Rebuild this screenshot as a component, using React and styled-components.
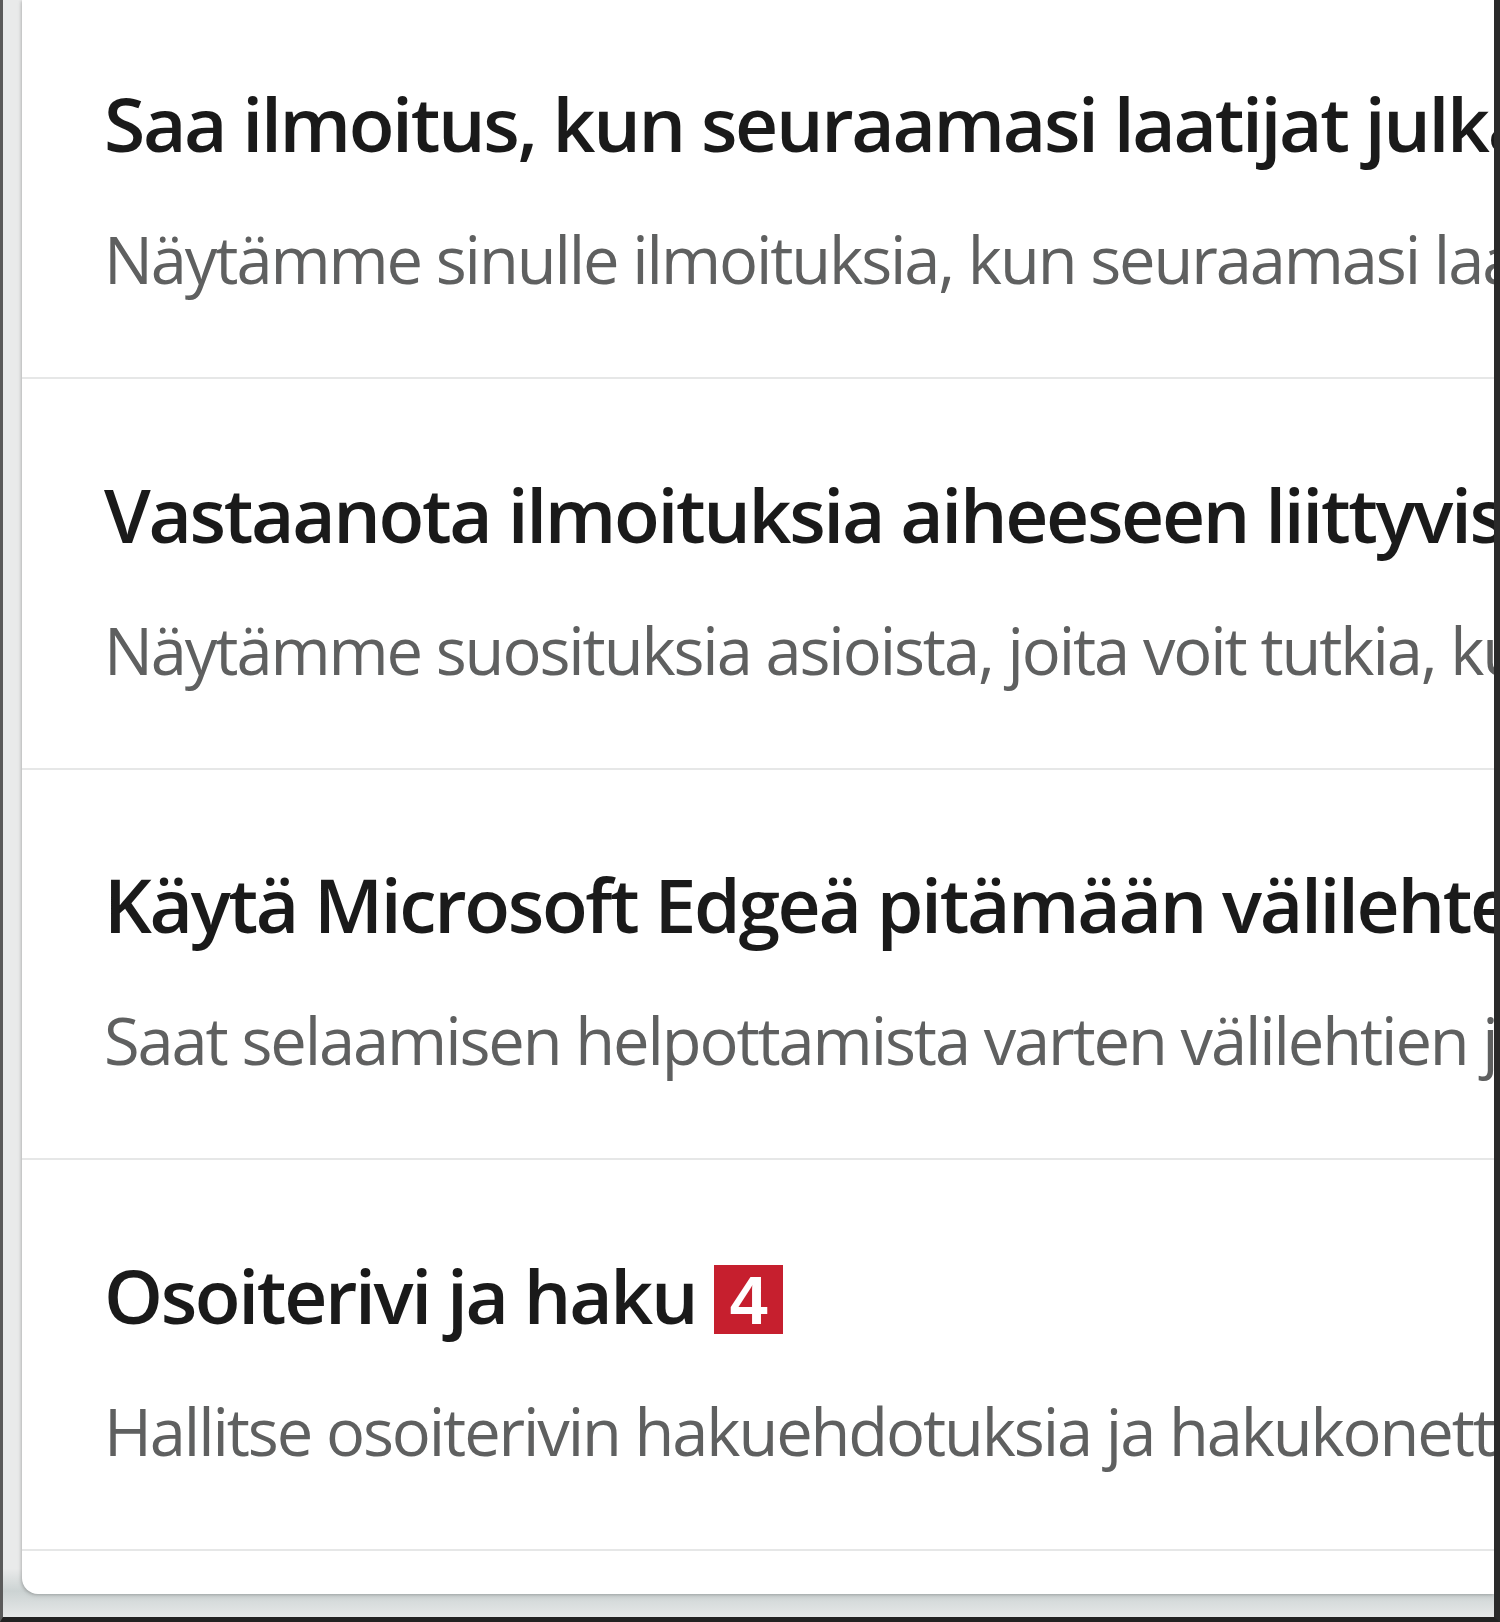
import React from 'react';
import styled, { createGlobalStyle } from 'styled-components';

const GlobalStyle = createGlobalStyle`
  html, body {
    margin: 0;
    padding: 0;
    background: #2b2b2b;
  }
`;

const Screen = styled.div`
  box-sizing: border-box;
  width: 1500px;
  height: 1622px;
  display: flex;
  flex-direction: column;
  border-left: 3px solid #5a5a5a;
  border-right: 6px solid #2a2a2a;
  border-bottom: 5px solid #222;
  background: linear-gradient(to bottom, #e9eaea 0%, #e9eaea 97%, #ccd3d3 98.4%, #e6e8e8 100%);
  overflow: hidden;
`;

const Card = styled.div`
  flex: 1;
  margin: 0 0 23px 19px;
  background: #ffffff;
  border-bottom-left-radius: 16px;
  box-shadow: -1px 1px 3px rgba(0, 0, 0, 0.18), 0 2px 6px rgba(0, 0, 0, 0.08);
  overflow: hidden;
`;

// the list is scrolled a little, so the first row starts above the top edge
const List = styled.div`
  margin-top: -11.5px;
  display: flex;
  flex-direction: column;
`;

const Row = styled.div`
  padding: 88.5px 0 78px 82px;
  border-bottom: 2px solid #e6e7e7;
  display: flex;
  flex-direction: column;
`;

const Title = styled.div`
  display: flex;
  align-items: flex-start;
  white-space: nowrap;
  font-family: "Open Sans", "Noto Sans", sans-serif;
  font-weight: 600;
  font-size: 75px;
  line-height: 92px;
  color: #1a1a1a;
  letter-spacing: -2.35px;
`;

const Desc = styled.div`
  margin-top: 50px;
  white-space: nowrap;
  font-family: "Open Sans", "Noto Sans", sans-serif;
  font-weight: 400;
  font-size: 65px;
  line-height: 80px;
  color: #5f6060;
  letter-spacing: -2.1px;
`;

const Badge = styled.span`
  margin: 16.5px 0 0 18px;
  width: 69px;
  height: 69px;
  display: flex;
  align-items: center;
  justify-content: center;
  background: #c61f2e;
  color: #ffffff;
  font-family: "Liberation Sans", Arial, sans-serif;
  font-weight: 700;
  font-size: 68px;
  line-height: 1;
  letter-spacing: 0;
`;

const settings = [
  {
    title: 'Saa ilmoitus, kun seuraamasi laatijat julkaisevat uutta sisältöä',
    desc: 'Näytämme sinulle ilmoituksia, kun seuraamasi laatijat julkaisevat uutta sisältöä.',
  },
  {
    title: 'Vastaanota ilmoituksia aiheeseen liittyvistä asioista',
    desc: 'Näytämme suosituksia asioista, joita voit tutkia, kun selaat verkkoa.',
  },
  {
    title: 'Käytä Microsoft Edgeä pitämään välilehtesi järjestyksessä',
    desc: 'Saat selaamisen helpottamista varten välilehtien järjestämisehdotuksia.',
  },
  {
    title: 'Osoiterivi ja haku',
    desc: 'Hallitse osoiterivin hakuehdotuksia ja hakukonetta',
    badge: 4,
  },
];

export default function App() {
  return (
    <>
      <GlobalStyle />
      <Screen>
        <Card>
          <List>
            {settings.map((s) => (
              <Row key={s.title}>
                <Title>
                  {s.title}
                  {s.badge && <Badge>{s.badge}</Badge>}
                </Title>
                <Desc>{s.desc}</Desc>
              </Row>
            ))}
          </List>
        </Card>
      </Screen>
    </>
  );
}
